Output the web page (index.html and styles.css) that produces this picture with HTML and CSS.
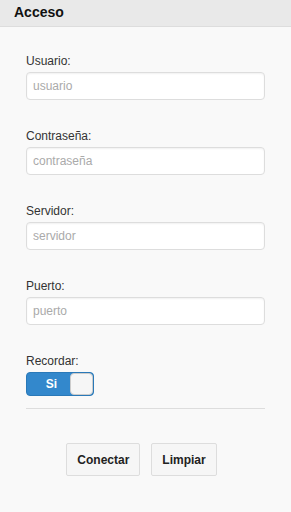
FILE: index.html
```html
<!DOCTYPE html>
<html lang="es">
<head>
    <meta charset="UTF-8">
    <meta name="viewport" content="width=device-width, initial-scale=1.0">
    <title>Acceso</title>
    <link rel="stylesheet" href="styles.css">
</head>
<body>
    <header class="header">
        <h1>Acceso</h1>
    </header>
    <div class="content">
        <form id="loginForm">
            <div class="field">
                <label for="usuario">Usuario:</label>
                <input type="text" id="usuario" placeholder="usuario">
            </div>
            <div class="field">
                <label for="clave">Contraseña:</label>
                <input type="password" id="clave" placeholder="contraseña">
            </div>
            <div class="field">
                <label for="servidor">Servidor:</label>
                <input type="text" id="servidor" placeholder="servidor">
            </div>
            <div class="field">
                <label for="puerto">Puerto:</label>
                <input type="text" id="puerto" placeholder="puerto">
            </div>
            <div class="field field-last">
                <label>Recordar:</label>
                <div class="toggle">
                    <span class="toggle-on">Si</span>
                    <span class="toggle-knob"></span>
                </div>
            </div>
            <hr>
            <div class="buttons">
                <button type="submit" class="btn">Conectar</button>
                <button type="reset" class="btn">Limpiar</button>
            </div>
        </form>
    </div>
</body>
</html>
```

FILE: styles.css
```css
body {
    font-family: "Liberation Sans", Arial, sans-serif;
    background-color: #f9f9f9;
    margin: 0;
    padding: 0;
    color: #333;
}
.header {
    background-color: #e9e9e9;
    border-bottom: 1px solid #ddd;
    height: 26px;
}
.header h1 {
    margin: 0;
    padding: 3px 14px 0;
    font-size: 14px;
    font-weight: bold;
    color: #111;
    line-height: 18px;
}
.content {
    padding: 26px 26px 0;
}
.field {
    margin-bottom: 28px;
}
.field-last {
    margin-bottom: 12px;
}
.field label {
    display: block;
    font-size: 12px;
    line-height: 16px;
    margin-bottom: 3px;
    color: #333;
}
input {
    box-sizing: border-box;
    width: 100%;
    height: 28px;
    padding: 0 6px;
    font-family: inherit;
    font-size: 12px;
    color: #333;
    background-color: #fff;
    border: 1px solid #ddd;
    border-radius: 4px;
    box-shadow: inset 0 1px 2px rgba(0, 0, 0, 0.06);
    outline: none;
}
input::placeholder {
    color: #aaa;
}
.toggle {
    box-sizing: border-box;
    width: 68px;
    height: 24px;
    display: flex;
    align-items: center;
    background-color: #3388cc;
    border: 1px solid #2a79b8;
    border-radius: 4px;
}
.toggle-on {
    flex: 1;
    padding-left: 6px;
    text-align: center;
    color: #fff;
    font-size: 12px;
    font-weight: bold;
}
.toggle-knob {
    box-sizing: border-box;
    width: 23px;
    height: 22px;
    background-color: #f6f6f6;
    border: 1px solid #ccc;
    border-radius: 4px;
}
hr {
    border: none;
    border-top: 1px solid #ddd;
    margin: 0;
}
.buttons {
    display: flex;
    justify-content: center;
    gap: 11px;
    margin-top: 34px;
    padding-right: 8px;
}
.btn {
    height: 33px;
    padding: 0 10px;
    font-family: inherit;
    font-size: 12px;
    font-weight: bold;
    color: #222;
    background-color: #f6f6f6;
    border: 1px solid #ddd;
    border-radius: 2px;
}
```
